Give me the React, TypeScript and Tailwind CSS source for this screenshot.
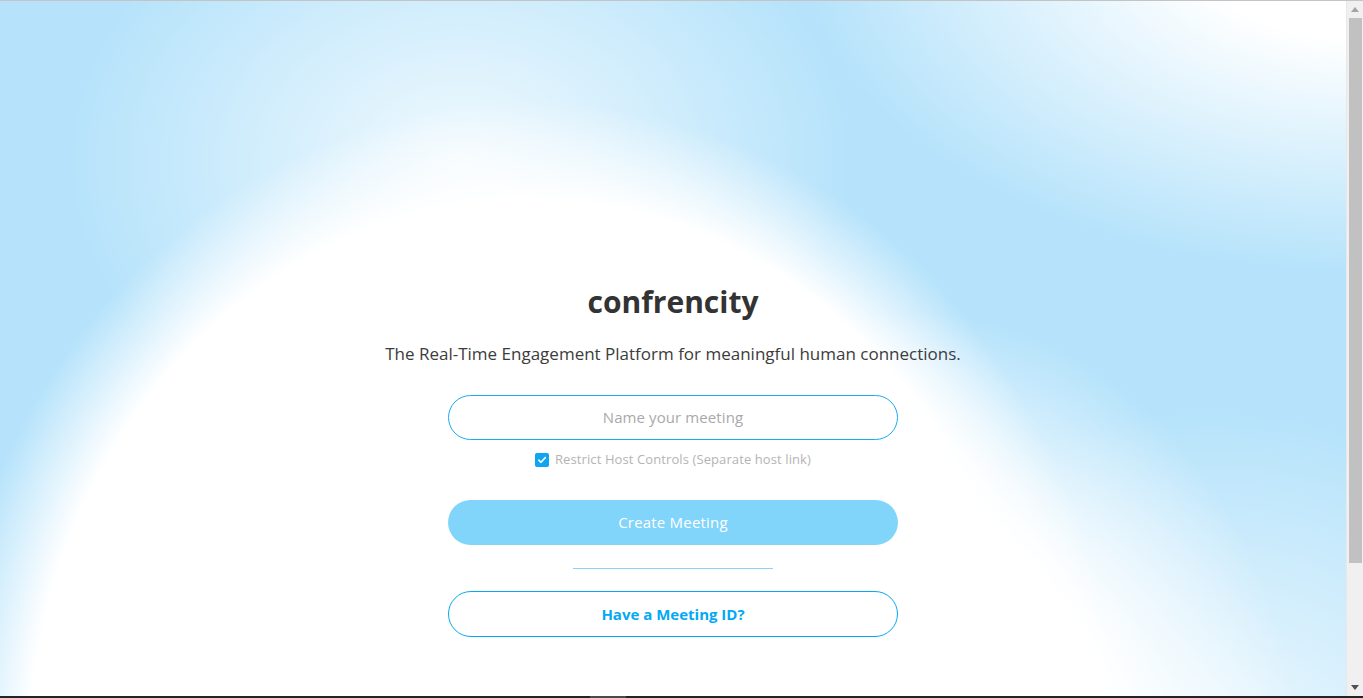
import React from "react";

const bg = {
  backgroundImage: [
    "radial-gradient(590px 660px at 530px 760px, #ffffff 0%, #ffffff 85%, rgba(255,255,255,0) 100%)",
    "radial-gradient(400px 460px at 900px 770px, #ffffff 0%, #ffffff 55%, rgba(255,255,255,0) 100%)",
    "radial-gradient(420px 380px at 1210px 790px, rgba(255,255,255,0.85) 0%, rgba(255,255,255,0) 100%)",
    "radial-gradient(560px 330px at 1363px -60px, #ffffff 0%, #ffffff 30%, rgba(255,255,255,0) 100%)",
    "radial-gradient(390px 300px at 460px 160px, rgba(255,255,255,0.8) 0%, rgba(255,255,255,0) 100%)",
  ].join(","),
};

export default function App() {
  return (
    <div
      className="flex h-screen w-full flex-col overflow-hidden bg-white"
      style={{ fontFamily: '"Open Sans", "Noto Sans", sans-serif' }}
    >
      <div className="h-px w-full shrink-0 bg-[#c4c4c4]" />
      <div className="flex min-h-0 flex-1">
        <main className="flex flex-1 flex-col items-center bg-[#b6e3fb] pt-[282px]" style={bg}>
          <h1 className="text-[30px] font-bold leading-[38px] text-[#333333]">confrencity</h1>
          <p className="mt-[21px] text-[17px] leading-[24px] text-[#3c3c3c]">
            The Real-Time Engagement Platform for meaningful human connections.
          </p>
          <div className="mt-[29px] flex h-[45px] w-[450px] items-center justify-center rounded-full border border-[#1aaaf0] bg-white">
            <span className="text-[15px] tracking-[0.1px] text-[#a9a9a9]">Name your meeting</span>
          </div>
          <label className="mt-[10px] flex h-[20px] items-center gap-[6px]">
            <span className="flex h-[14px] w-[14px] items-center justify-center rounded-[2px] bg-[#0ea5f3]">
              <svg width="10" height="10" viewBox="0 0 10 10" fill="none">
                <path d="M1.8 5.2 L4 7.3 L8.3 2.6" stroke="white" strokeWidth="1.6" strokeLinecap="round" strokeLinejoin="round" />
              </svg>
            </span>
            <span className="text-[13px] tracking-[0.1px] text-[#b4b4b4]">Restrict Host Controls (Separate host link)</span>
          </label>
          <button className="mt-[30px] flex h-[45px] w-[450px] items-center justify-center rounded-full bg-[#81d4fa] text-[15px] tracking-[0.2px] text-white">
            Create Meeting
          </button>
          <div className="mt-[23px] h-px w-[200px] bg-[#90d0f3]" />
          <button className="mt-[22px] flex h-[46px] w-[450px] items-center justify-center rounded-full border border-[#03a9f4] bg-white text-[15px] font-bold text-[#03a9f4]">
            Have a Meeting ID?
          </button>
        </main>
        <aside className="flex w-[17px] shrink-0 flex-col items-center border-l border-[#e8e8e8] bg-[#f0f0f0]">
          <div className="flex h-[17px] w-full items-center justify-center">
            <svg width="8" height="5" viewBox="0 0 8 5"><path d="M0 5 L4 0 L8 5 Z" fill="#a3a3a3" /></svg>
          </div>
          <div className="h-[545px] w-[13px] bg-[#c1c1c1]" />
          <div className="flex-1" />
          <div className="flex h-[17px] w-full items-center justify-center">
            <svg width="8" height="5" viewBox="0 0 8 5"><path d="M0 0 L8 0 L4 5 Z" fill="#505050" /></svg>
          </div>
        </aside>
      </div>
      <div className="flex h-[2px] w-full shrink-0 bg-[#232323]">
        <div className="w-[590px]" />
        <div className="w-[36px] bg-[#4a4a4a]" />
      </div>
    </div>
  );
}
